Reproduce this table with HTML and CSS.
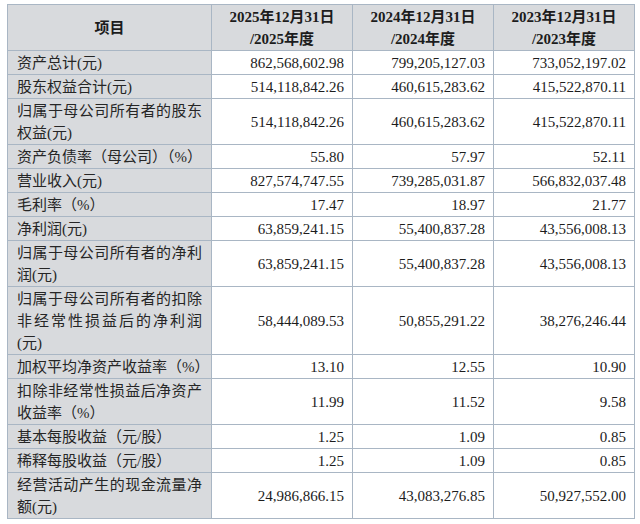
FILE: index.html
```html
<!DOCTYPE html>
<html lang="zh-CN">
<head>
<meta charset="utf-8">
<title>主要财务数据</title>
<link rel="stylesheet" href="styles.css">
</head>
<body>
<table class="fin">
  <colgroup>
    <col class="c-item"><col class="c-num"><col class="c-num"><col class="c-num">
  </colgroup>
  <thead>
    <tr>
      <th class="h-item">项目</th>
      <th>2025年12月31日<br>/2025年度</th>
      <th>2024年12月31日<br>/2024年度</th>
      <th>2023年12月31日<br>/2023年度</th>
    </tr>
  </thead>
  <tbody>
    <tr><td class="lbl">资产总计(元)</td><td>862,568,602.98</td><td>799,205,127.03</td><td>733,052,197.02</td></tr>
    <tr><td class="lbl">股东权益合计(元)</td><td>514,118,842.26</td><td>460,615,283.62</td><td>415,522,870.11</td></tr>
    <tr><td class="lbl">归属于母公司所有者的股东权益(元)</td><td>514,118,842.26</td><td>460,615,283.62</td><td>415,522,870.11</td></tr>
    <tr><td class="lbl">资产负债率（母公司）（%）</td><td>55.80</td><td>57.97</td><td>52.11</td></tr>
    <tr><td class="lbl">营业收入(元)</td><td>827,574,747.55</td><td>739,285,031.87</td><td>566,832,037.48</td></tr>
    <tr><td class="lbl">毛利率（%）</td><td>17.47</td><td>18.97</td><td>21.77</td></tr>
    <tr><td class="lbl">净利润(元)</td><td>63,859,241.15</td><td>55,400,837.28</td><td>43,556,008.13</td></tr>
    <tr><td class="lbl">归属于母公司所有者的净利润(元)</td><td>63,859,241.15</td><td>55,400,837.28</td><td>43,556,008.13</td></tr>
    <tr><td class="lbl">归属于母公司所有者的扣除非经常性损益后的净利润(元)</td><td>58,444,089.53</td><td>50,855,291.22</td><td>38,276,246.44</td></tr>
    <tr><td class="lbl">加权平均净资产收益率（%）</td><td>13.10</td><td>12.55</td><td>10.90</td></tr>
    <tr><td class="lbl">扣除非经常性损益后净资产收益率（%）</td><td>11.99</td><td>11.52</td><td>9.58</td></tr>
    <tr><td class="lbl">基本每股收益（元/股）</td><td>1.25</td><td>1.09</td><td>0.85</td></tr>
    <tr><td class="lbl">稀释每股收益（元/股）</td><td>1.25</td><td>1.09</td><td>0.85</td></tr>
    <tr><td class="lbl">经营活动产生的现金流量净额(元)</td><td>24,986,866.15</td><td>43,083,276.85</td><td>50,927,552.00</td></tr>
  </tbody>
</table>
</body>
</html>
```
FILE: styles.css
```css
html, body {
  margin: 0;
  padding: 0;
  background: #ffffff;
}

body {
  padding: 4px 0 0 7px;
  font-family: "Liberation Serif", "Noto Sans CJK SC", serif;
  font-size: 15px;
  color: #1c1c1c;
}

.fin {
  border-collapse: collapse;
  table-layout: fixed;
  width: 627px;
  border: 1px solid #a3b0be;
}

.c-item { width: 204px; }
.c-num { width: 141px; }

.fin th,
.fin td {
  border: 1px solid #a9b6c4;
  padding: 0.5px 8px;
  line-height: 22px;
  vertical-align: middle;
}

.fin th {
  background: #d8dadd;
  font-weight: bold;
  text-align: center;
  padding: 0.5px 2px;
}

.fin td {
  text-align: right;
  background: #ffffff;
  padding-right: 8px;
}

.fin td.lbl {
  background: #d8dadd;
  text-align: justify;
  padding: 0.5px 9px 0.5px 9px;
  color: #262626;
}
```
